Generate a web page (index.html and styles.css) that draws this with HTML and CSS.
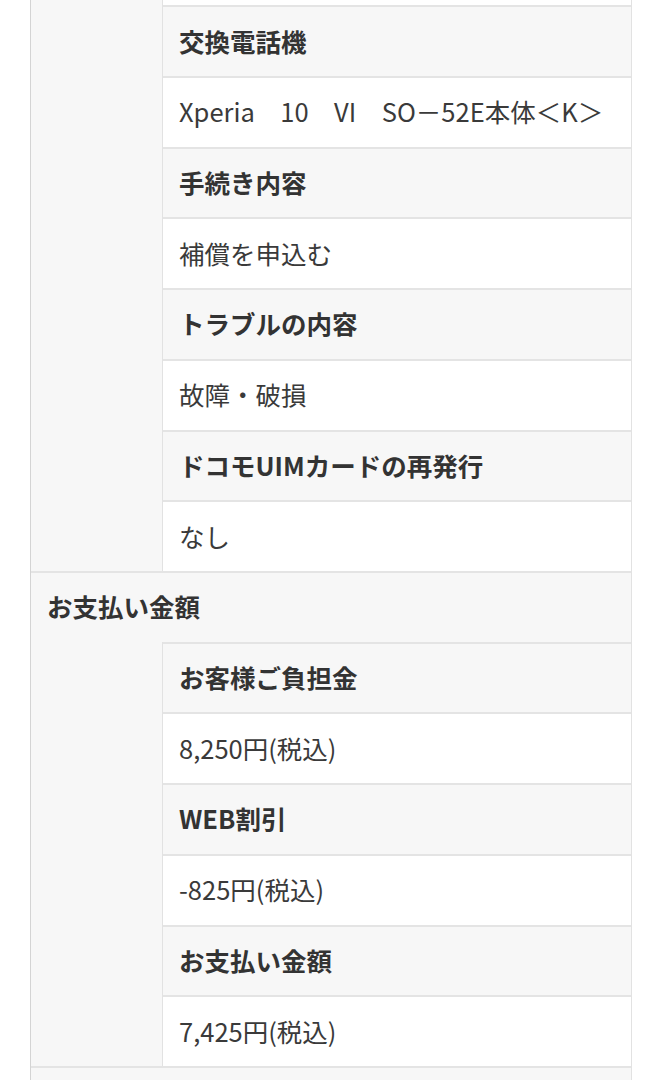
FILE: index.html
```html
<!DOCTYPE html>
<html lang="ja">
<head>
<meta charset="utf-8">
<link rel="stylesheet" href="styles.css">
</head>
<body>
<div class="table">
  <div class="section">
    <div class="side"></div>
    <div class="inner">
      <div class="row val"></div>
      <div class="row lab">交換電話機</div>
      <div class="row val">Xperia　10　VI　SO－52E本体＜K＞</div>
      <div class="row lab">手続き内容</div>
      <div class="row val">補償を申込む</div>
      <div class="row lab">トラブルの内容</div>
      <div class="row val">故障・破損</div>
      <div class="row lab">ドコモUIMカードの再発行</div>
      <div class="row val">なし</div>
    </div>
  </div>
  <div class="head">お支払い金額</div>
  <div class="section">
    <div class="side"></div>
    <div class="inner">
      <div class="row lab">お客様ご負担金</div>
      <div class="row val">8,250円(税込)</div>
      <div class="row lab">WEB割引</div>
      <div class="row val">-825円(税込)</div>
      <div class="row lab">お支払い金額</div>
      <div class="row val">7,425円(税込)</div>
    </div>
  </div>
  <div class="head"></div>
</div>
</body>
</html>
```

FILE: styles.css
```css
html, body {
  margin: 0;
  padding: 0;
  background: #fff;
}
body {
  font-family: "Noto Sans CJK JP", "Noto Sans", sans-serif;
  font-size: 25.5px;
  color: #333;
  overflow: hidden;
  height: 1080px;
}
.table {
  margin-top: -65.5px;
  margin-left: 30px;
  width: 602px;
  border-left: 1px solid #d4d4d4;
  border-right: 1px solid #e2e2e2;
  box-sizing: border-box;
  background: #f7f7f7;
}
.section {
  display: grid;
  grid-template-columns: 131px 1fr;
}
.side {
  background: #f7f7f7;
}
.inner {
  border-left: 1px solid #e2e2e2;
}
.row, .head {
  height: 70.73px;
  box-sizing: border-box;
  border-top: 2px solid #e4e4e4;
  display: flex;
  align-items: center;
  padding-left: 16px;
  padding-bottom: 3px;
  white-space: nowrap;
}
.head {
  background: #f7f7f7;
  font-weight: 700;
}
.lab {
  background: #f7f7f7;
  font-weight: 700;
}
.val {
  background: #fff;
  font-weight: 400;
  color: #3a3a3a;
}
```
